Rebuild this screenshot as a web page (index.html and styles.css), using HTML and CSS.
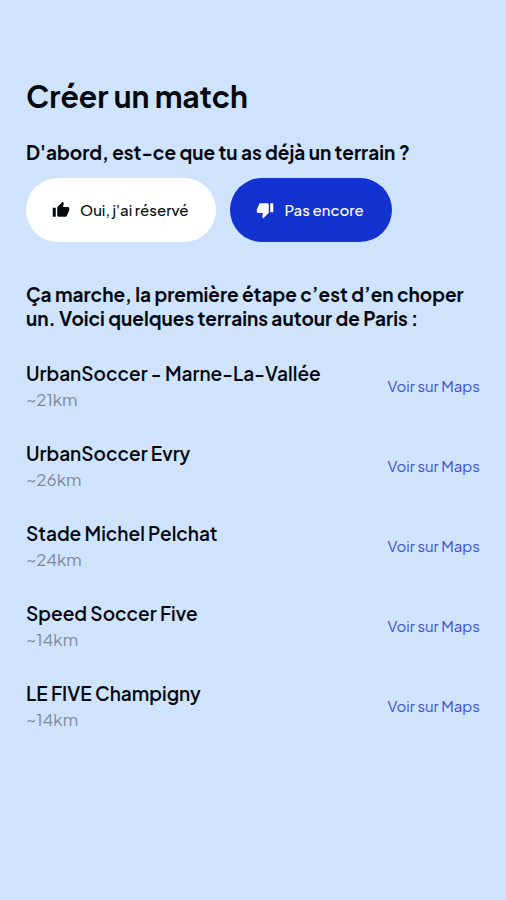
FILE: index.html
```html
<!DOCTYPE html>
<html lang="fr">
<head>
<meta charset="utf-8">
<meta name="viewport" content="width=device-width, initial-scale=1">
<title>Créer un match</title>
<link rel="stylesheet" href="styles.css">
</head>
<body>
<main class="page">
  <h1 class="title">Créer un match</h1>
  <h2 class="question" id="question">D'abord, est-ce que tu as déjà un terrain ?</h2>
  <div class="choices" role="group" aria-labelledby="question">
    <button class="choice" type="button">
      <svg class="icon" viewBox="0 0 24 24" aria-hidden="true"><path d="M1 21h4V9H1v12zm22-11c0-1.1-.9-2-2-2h-6.310l.95-4.570.03-.32c0-.41-.17-.79-.44-1.060L14.170 1 7.590 7.590C7.220 7.950 7 8.450 7 9v10c0 1.100.9 2 2 2h9c.83 0 1.540-.5 1.840-1.220l3.020-7.050c.09-.23.14-.47.14-.73v-2z"/></svg>
      <span>Oui, j'ai réservé</span>
    </button>
    <button class="choice choice-active" type="button">
      <svg class="icon" viewBox="0 0 24 24" aria-hidden="true"><path d="M15 3H6c-.83 0-1.540.5-1.840 1.220l-3.020 7.050c-.09.23-.14.47-.14.73v2c0 1.100.9 2 2 2h6.310l-.95 4.570-.03.32c0 .41.17.79.44 1.060L9.830 23l6.590-6.590c.36-.36.58-.86.58-1.410V5c0-1.100-.9-2-2-2zm4 0v12h4V3h-4z"/></svg>
      <span>Pas encore</span>
    </button>
  </div>
  <p class="intro">Ça marche, la première étape c’est d’en choper un. Voici quelques terrains autour de Paris :</p>
  <ul class="fields">
    <li class="field"><div><h3 class="name">UrbanSoccer - Marne-La-Vallée</h3><p class="distance">~21km</p></div><a class="link" href="#">Voir sur Maps</a></li>
    <li class="field"><div><h3 class="name">UrbanSoccer Evry</h3><p class="distance">~26km</p></div><a class="link" href="#">Voir sur Maps</a></li>
    <li class="field"><div><h3 class="name">Stade Michel Pelchat</h3><p class="distance">~24km</p></div><a class="link" href="#">Voir sur Maps</a></li>
    <li class="field"><div><h3 class="name">Speed Soccer Five</h3><p class="distance">~14km</p></div><a class="link" href="#">Voir sur Maps</a></li>
    <li class="field"><div><h3 class="name">LE FIVE Champigny</h3><p class="distance">~14km</p></div><a class="link" href="#">Voir sur Maps</a></li>
  </ul>
</main>
</body>
</html>
```
FILE: styles.css
```css
* { box-sizing: border-box; margin: 0; padding: 0; }
body {
  background: #cfe3fc;
  color: #060a10;
  font-family: "Plus Jakarta Sans", "Open Sans", sans-serif;
}
.page { padding: 76px 26px 40px; }
.title { font-size: 30px; line-height: 40px; font-weight: 700; }
.question { margin-top: 24px; font-size: 19px; line-height: 24px; font-weight: 700; }
.choices { display: flex; gap: 14px; margin-top: 14px; }
.choice {
  display: flex;
  align-items: center;
  gap: 10px;
  height: 64px;
  padding: 0 28px 0 26px;
  border: 0;
  border-radius: 32px;
  background: #fff;
  color: #060a10;
  font: 500 15px/24px "Plus Jakarta Sans", "Open Sans", sans-serif;
  white-space: nowrap;
}
.choice-active { background: #1233cf; color: #fff; }
.icon { width: 18px; height: 18px; fill: currentColor; }
.intro { margin-top: 40px; font-size: 19px; line-height: 24px; font-weight: 700; }
.fields { display: grid; gap: 28px; margin-top: 30px; list-style: none; }
.field { display: flex; align-items: center; justify-content: space-between; }
.name { font-size: 19px; line-height: 26px; font-weight: 600; }
.distance { color: #7d8998; font-size: 17px; line-height: 26px; }
.link { color: #3b4fd9; font-size: 15px; line-height: 24px; text-decoration: none; }
```
